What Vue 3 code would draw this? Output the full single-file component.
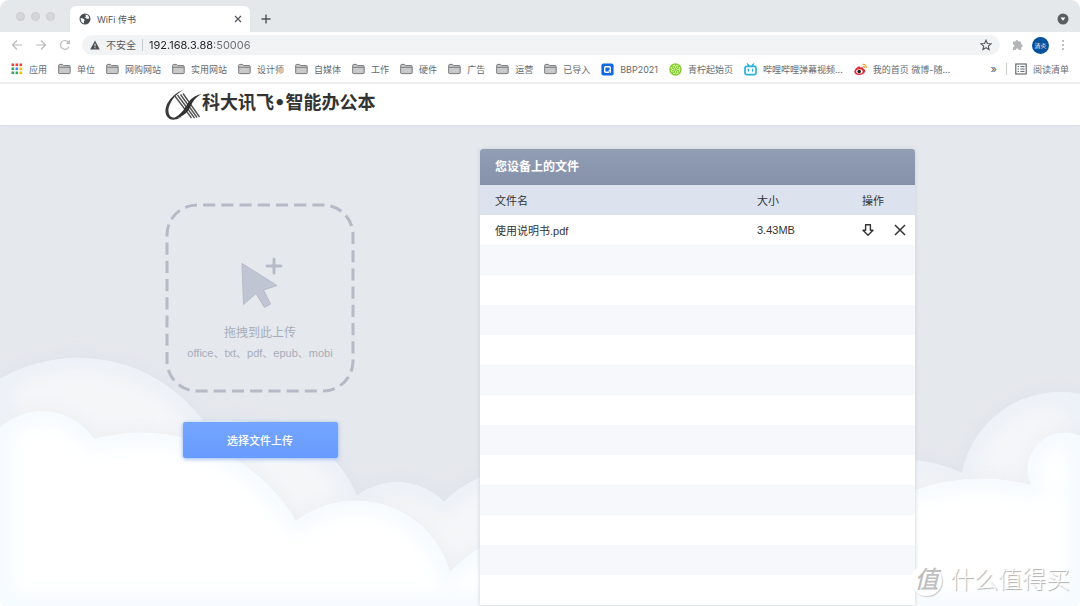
<script setup>
import { ref } from 'vue'

const address = ref('192.168.3.88:50006')
const fileInput = ref(null)

const bookmarks = [
  { icon: 'apps', label: '应用' },
  { icon: 'folder', label: '单位' },
  { icon: 'folder', label: '网购网站' },
  { icon: 'folder', label: '实用网站' },
  { icon: 'folder', label: '设计师' },
  { icon: 'folder', label: '自媒体' },
  { icon: 'folder', label: '工作' },
  { icon: 'folder', label: '硬件' },
  { icon: 'folder', label: '广告' },
  { icon: 'folder', label: '运营' },
  { icon: 'folder', label: '已导入' },
  { icon: 'bbp', label: 'BBP2021' },
  { icon: 'lime', label: '青柠起始页' },
  { icon: 'bili', label: '哔哩哔哩弹幕视频...' },
  { icon: 'weibo', label: '我的首页 微博-随...' },
]

const appDots = ['#ea4335', '#ea4335', '#ea4335', '#34a853', '#4285f4', '#fbbc04', '#34a853', '#34a853', '#fbbc04']

const files = ref([{ name: '使用说明书.pdf', size: '3.43MB' }])
const emptyRows = 12

const backCloud =
  'M0 379 A155 155 0 0 1 203 421 Q300 415 340 467 Q350 480 357 496 A65 65 0 0 1 444 502 Q470 475 520 465 Q600 500 700 480 Q800 440 915 460 Q940 463 962 473 A100 100 0 0 1 1080 394 V606 H0 Z'
const frontCloud =
  'M0 428 A62 62 0 0 1 94 439 A180 180 0 0 1 296 521 A98 98 0 0 1 450 572 Q470 550 500 538 H800 Q860 505 915 490 A205 205 0 0 1 1031 485 A37 37 0 0 1 1080 436 V606 H0 Z'

function pickFiles() {
  fileInput.value.click()
}
</script>

<template>
  <div class="window">
    <header class="browser">
      <div class="tabstrip">
        <div class="lights"><i></i><i></i><i></i></div>
        <div class="tab">
          <svg width="12" height="12" viewBox="0 0 12 12">
            <circle cx="6" cy="6" r="5.5" fill="#4a4e53" />
            <path d="M1.6 5 L4.2 5.6 L5.8 7 L4.9 8.2 L5 10.4 Q1.6 9.6 1.6 5Z M6.4 1.6 Q9.4 1.8 10.3 4.6 L9.4 6 L7.4 5.6 L6 4.4 L6.9 3.2Z" fill="#fff" />
          </svg>
          <span class="tab-title">WiFi 传书</span>
          <button class="plain" aria-label="关闭标签页">
            <svg width="8" height="8" viewBox="0 0 8 8"><path d="M1 1 L7 7 M7 1 L1 7" stroke="#55595e" stroke-width="1.3" /></svg>
          </button>
        </div>
        <button class="plain new-tab" aria-label="新标签页">
          <svg width="10" height="10" viewBox="0 0 10 10"><path d="M5 .5 V9.5 M.5 5 H9.5" stroke="#4d5156" stroke-width="1.4" /></svg>
        </button>
        <button class="plain tab-search" aria-label="搜索标签页">
          <svg width="12" height="12" viewBox="0 0 12 12"><circle cx="6" cy="6" r="5.5" fill="#5a5e63" /><path d="M3.6 4.6 H8.4 L6 7.8Z" fill="#fff" /></svg>
        </button>
      </div>

      <div class="toolbar">
        <div class="nav">
          <button class="plain" aria-label="后退">
            <svg width="12" height="12" viewBox="0 0 12 12"><path d="M11 6 H1.5 M6 1.5 L1.5 6 L6 10.5" fill="none" stroke="#b9bbbe" stroke-width="1.2" /></svg>
          </button>
          <button class="plain" aria-label="前进">
            <svg width="12" height="12" viewBox="0 0 12 12"><path d="M1 6 H10.5 M6 1.5 L10.5 6 L6 10.5" fill="none" stroke="#b9bbbe" stroke-width="1.2" /></svg>
          </button>
          <button class="plain" aria-label="重新加载">
            <svg width="12" height="12" viewBox="0 0 12 12"><path d="M10 7.5 A4.4 4.4 0 1 1 9.4 3.2" fill="none" stroke="#b9bbbe" stroke-width="1.2" /><path d="M11 .8 V5 H6.8Z" fill="#b9bbbe" /></svg>
          </button>
        </div>
        <div class="omnibox">
          <svg width="10" height="10" viewBox="0 0 10 10"><path d="M5 .6 L9.8 9.4 H.2Z" fill="#4d5156" /><path d="M5 3.6 V6.4 M5 7.2 V8.3" stroke="#f1f3f4" stroke-width="1" /></svg>
          <label class="insecure" for="address">不安全</label>
          <span class="bar"></span>
          <input id="address" v-model="address" class="address" type="text" spellcheck="false" />
          <button class="plain" aria-label="为此页添加书签">
            <svg width="12" height="12" viewBox="0 0 12 12"><path d="M6 1.2 L7.4 4.5 L11 4.8 L8.3 7.1 L9.1 10.6 L6 8.7 L2.9 10.6 L3.7 7.1 L1 4.8 L4.6 4.5Z" fill="none" stroke="#54585d" stroke-width="1.1" /></svg>
          </button>
        </div>
        <button class="plain" aria-label="扩展程序">
          <svg width="12" height="12" viewBox="0 0 12 12"><path d="M1 2.6 H3.4 A1.5 1.5 0 1 1 6.4 2.6 H9.2 V5.2 A1.5 1.5 0 1 1 9.2 8.2 V11 H6.6 A1.4 1.4 0 0 0 3.8 11 H1 V8.2 A1.4 1.4 0 0 0 1 5.4Z" fill="#b3b5b8" /></svg>
        </button>
        <button class="avatar" aria-label="用户">清炎</button>
        <button class="plain" aria-label="菜单">
          <svg width="4" height="12" viewBox="0 0 4 12" fill="#a9acaf"><circle cx="2" cy="2" r="1" /><circle cx="2" cy="6" r="1" /><circle cx="2" cy="10" r="1" /></svg>
        </button>
      </div>

      <nav class="bookmarks">
        <a v-for="mark in bookmarks" :key="mark.label" href="#" class="bookmark">
          <svg v-if="mark.icon === 'apps'" width="12" height="12" viewBox="0 0 12 12">
            <rect v-for="(c, i) in appDots" :key="i" :x="(i % 3) * 4 + 0.5" :y="Math.floor(i / 3) * 4 + 0.5" width="2.6" height="2.6" :fill="c" />
          </svg>
          <svg v-else-if="mark.icon === 'folder'" width="13" height="12" viewBox="0 0 13 12">
            <path d="M.7 10 V2.4 Q.7 1.4 1.7 1.4 H4.6 L5.7 2.6 H11 Q12.2 2.6 12.2 3.6 V9.9 Q12.2 10.6 11.3 10.6 H1.5 Q.7 10.6 .7 10Z" fill="#c9c9c9" stroke="#77797b" stroke-width="1" />
            <path d="M1 4.3 H12" stroke="#77797b" stroke-width=".9" />
          </svg>
          <svg v-else-if="mark.icon === 'bbp'" width="13" height="13" viewBox="0 0 13 13">
            <rect x=".4" y=".4" width="12.2" height="12.2" rx="2" fill="#0f68e0" />
            <path d="M8 9.2 H4.6 Q3.7 9.2 3.7 8.300 V4.600 Q3.7 3.7 4.600 3.7 H8.400 Q9.300 3.7 9.300 4.600 V8 M7.600 7.600 H9.300 V9.800" fill="none" stroke="#fff" stroke-width="1.4" />
          </svg>
          <svg v-else-if="mark.icon === 'lime'" width="13" height="13" viewBox="0 0 13 13">
            <circle cx="6.5" cy="6.5" r="6.2" fill="#84cc2e" />
            <circle cx="6.5" cy="6.5" r="4.2" fill="none" stroke="#d5f2a5" stroke-width="1.200" stroke-dasharray="2.300 1" />
            <path d="M6.5 3 V10 M3 6.5 H10 M4.2 4.2 L8.8 8.8 M8.8 4.2 L4.2 8.8" stroke="#e6f8c8" stroke-width=".8" />
            <circle cx="6.5" cy="6.5" r="1.2" fill="#84cc2e" />
          </svg>
          <svg v-else-if="mark.icon === 'bili'" width="13" height="13" viewBox="0 0 13 13">
            <rect x="1" y="3.4" width="11" height="8.2" rx="1.6" fill="none" stroke="#2bb0dc" stroke-width="1.7" />
            <path d="M3.4 .9 L5 3 M9.6 .9 L8 3 M4.4 6.3 V8 M8.6 6.3 V8" stroke="#2bb0dc" stroke-width="1.4" stroke-linecap="round" />
          </svg>
          <svg v-else width="13" height="13" viewBox="0 0 13 13">
            <path d="M.3 8.2 Q1 5 4.5 3.5 Q6.4 3 6.200 4.6 Q9.6 3.6 9.300 5.700 Q11.8 6.5 11 9 Q9.200 12 5 12 Q.3 11.8 .3 8.2Z" fill="#dd2b35" />
            <ellipse cx="5.4" cy="8.4" rx="3.2" ry="2.2" fill="#fff" />
            <circle cx="5.2" cy="8.5" r="1.8" fill="#222" />
            <path d="M8.6 1.5 Q12.4 1 12.3 5 M8.8 3.5 Q10.5 3.3 10.4 5" fill="none" stroke="#f3a02c" stroke-width="1.200" />
          </svg>
          <span>{{ mark.label }}</span>
        </a>
        <button class="plain more" aria-label="更多书签">»</button>
        <span class="bar"></span>
        <a href="#" class="bookmark">
          <svg width="12" height="12" viewBox="0 0 12 12"><rect x=".8" y="1" width="10.4" height="10" fill="none" stroke="#5b5f64" stroke-width="1.1" /><path d="M2.6 3.6 H4 M2.6 6 H4 M2.6 8.4 H4 M5.4 3.6 H9.5 M5.4 6 H9.5 M5.4 8.4 H9.5" stroke="#5b5f64" stroke-width="1" /></svg>
          <span>阅读清单</span>
        </a>
      </nav>
    </header>

    <div class="site-header">
      <div class="container brand">
        <svg width="37" height="32" viewBox="0 0 37 32" aria-hidden="true">
          <path d="M19 .5 Q7 5 2 15 Q-2 25 4 29.500 Q9 32.500 17 28 Q9 30 5.500 27.500 Q1.500 23 5 15 Q9 6 19 .5Z" fill="#3a3a3a" />
          <path d="M9.500 6.500 L26.500 29 M12.500 6 L29.500 29 M15.500 5.500 L32 28.500 M18 4.500 L34.500 28" stroke="#555" stroke-width="1.400" />
          <path d="M36.500 5 Q29 6.500 24.500 12 L18.500 21 Q15 26 8 29.500 Q17 29 22.500 22.500 Q25 19 27.500 13.500 Q30.500 8 36.500 5Z" fill="#2f2f2f" />
        </svg>
        <h1>科大讯飞<span class="dot">•</span>智能办公本</h1>
      </div>
    </div>

    <main class="page">
      <svg class="clouds" viewBox="0 126 1080 480" aria-hidden="true">
        <defs>
          <filter id="soft" x="-10%" y="-20%" width="120%" height="140%"><feGaussianBlur stdDeviation="10" /></filter>
          <clipPath id="backClip"><path :d="backCloud" /></clipPath>
          <clipPath id="frontClip"><path :d="frontCloud" /></clipPath>
        </defs>
        <path :d="backCloud" fill="#dadfea" opacity=".6" filter="url(#soft)" />
        <path :d="backCloud" fill="#f5f6f8" />
        <g clip-path="url(#backClip)">
          <path :d="backCloud" fill="none" stroke="#ebf1f8" stroke-width="24" filter="url(#soft)" />
          <path :d="frontCloud" fill="#e9ebef" opacity=".8" filter="url(#soft)" />
        </g>
        <path :d="frontCloud" fill="#fff" />
        <g clip-path="url(#frontClip)">
          <path :d="frontCloud" fill="none" stroke="#f2f9ff" stroke-width="18" filter="url(#soft)" />
        </g>
      </svg>

      <div class="container content">
        <section class="upload">
          <div class="dropzone">
            <svg class="outline" width="190" height="190" viewBox="0 0 190 190" aria-hidden="true">
              <rect x="2" y="2" width="186" height="186" rx="30" fill="none" stroke="#b5bac6" stroke-width="3" pathLength="684" stroke-dasharray="12 6" stroke-dashoffset="12" />
            </svg>
            <svg width="46" height="52" viewBox="0 0 46 52" aria-hidden="true">
              <path d="M5 6.500 L40 28.500 L26.500 33 L33.500 47 L27.500 50.500 L19 36.500 L6.500 47.500Z" fill="#bfc5d2" stroke="#b5bbc9" stroke-width="1" />
              <path d="M37 2 V16 M30 9 H44" stroke="#b5bbc9" stroke-width="3" stroke-linecap="round" />
            </svg>
            <p class="hint">拖拽到此上传</p>
            <p class="formats">office、txt、pdf、epub、mobi</p>
          </div>
          <button class="choose" @click="pickFiles">选择文件上传</button>
          <input ref="fileInput" type="file" hidden aria-label="选择文件上传" />
        </section>

        <section class="panel">
          <h2>您设备上的文件</h2>
          <table>
            <thead>
              <tr><th class="name">文件名</th><th class="size">大小</th><th>操作</th></tr>
            </thead>
            <tbody>
              <tr v-for="file in files" :key="file.name">
                <td>{{ file.name }}</td>
                <td>{{ file.size }}</td>
                <td>
                  <div class="actions">
                    <button class="plain" aria-label="下载">
                      <svg width="12" height="12" viewBox="0 0 12 12"><path d="M3.600 .8 H8.400 V6.200 H11 L6 11.200 L1 6.200 H3.600Z" fill="none" stroke="#333" stroke-width="1.400" stroke-linejoin="round" /></svg>
                    </button>
                    <button class="plain" aria-label="删除">
                      <svg width="12" height="12" viewBox="0 0 12 12"><path d="M1 1 L11 11 M11 1 L1 11" stroke="#333" stroke-width="1.500" /></svg>
                    </button>
                  </div>
                </td>
              </tr>
              <tr v-for="n in emptyRows" :key="n"><td></td><td></td><td></td></tr>
            </tbody>
          </table>
        </section>
      </div>
    </main>

    <div class="watermark"><span class="badge">值</span><span>什么值得买</span></div>
  </div>
</template>

<style>
body {
  background: #fff;
}
</style>

<style scoped>
.window {
  position: relative;
  display: flex;
  flex-direction: column;
  height: 100vh;
  overflow: hidden;
  border-radius: 9px;
  background: #fff;
  color: #333;
  font-family: "Liberation Sans", "Noto Sans CJK SC", sans-serif;
  font-size: 11px;
}
.window * {
  box-sizing: border-box;
}
svg {
  display: block;
  flex: none;
}
button {
  font-family: inherit;
  cursor: pointer;
}
.plain {
  display: block;
  flex: none;
  padding: 0;
  border: 0;
  background: none;
}
a {
  color: inherit;
  text-decoration: none;
}
.bar {
  width: 1px;
  height: 12px;
  background: #c9cccf;
}

/* browser chrome */
.browser {
  flex: none;
  font-family: Inter, "Noto Sans CJK SC", sans-serif;
}
.tabstrip {
  display: flex;
  align-items: flex-end;
  height: 32px;
  padding: 0 11px 0 16px;
  background: #e4e8eb;
}
.lights {
  display: flex;
  gap: 6px;
  align-self: center;
  width: 54px;
}
.lights i {
  width: 9px;
  height: 9px;
  border: 1px solid #cacccd;
  border-radius: 50%;
  background: #d5d6d7;
}
.tab {
  display: flex;
  align-items: center;
  gap: 6px;
  width: 180px;
  height: 26px;
  padding: 0 8px 0 9px;
  border-radius: 6px 6px 0 0;
  background: #fff;
}
.tab-title {
  flex: 1;
  color: #50545a;
  font-size: 9px;
}
.new-tab {
  margin: 0 auto 8px 11px;
}
.tab-search {
  margin-bottom: 7px;
}
.toolbar {
  display: flex;
  align-items: center;
  gap: 12px;
  height: 26px;
  padding: 0 15px 0 11px;
}
.nav {
  display: flex;
  gap: 12px;
}
.omnibox {
  display: flex;
  flex: 1;
  align-items: center;
  gap: 6px;
  height: 20px;
  margin-left: -1px;
  padding: 0 8px;
  border-radius: 10px;
  background: #f1f3f4;
}
.insecure {
  color: #55595e;
  font-size: 10px;
  line-height: 12px;
}
.address {
  flex: 1;
  min-width: 0;
  padding: 0;
  border: 0;
  outline: 0;
  background: linear-gradient(90deg, #202124 64px, #676b70 64px);
  background-clip: text;
  color: transparent;
  font-family: inherit;
  font-size: 11px;
}
.avatar {
  width: 17px;
  height: 17px;
  margin-left: -4px;
  padding: 0;
  border: 0;
  border-radius: 50%;
  background: #07529a;
  color: #fff;
  font-size: 6px;
  line-height: 17px;
}
.bookmarks {
  display: flex;
  align-items: center;
  gap: 11px;
  height: 26px;
  padding: 0 11px 2px;
  border-bottom: 2px solid #eeeff1;
  color: #66696e;
  font-size: 9px;
  white-space: nowrap;
}
.bookmark {
  display: flex;
  flex: none;
  align-items: center;
  gap: 6px;
}
.more {
  margin-left: auto;
  color: #55595e;
  font-size: 11px;
}
.bookmarks .bar {
  margin: 0 -3px 0 -2px;
}

/* site */
.container {
  width: 100%;
  max-width: 750px;
  margin: 0 auto;
}
.site-header {
  z-index: 1;
  flex: none;
  background: #fff;
  box-shadow: 0 1px 2px #d8dce2;
}
.brand {
  display: flex;
  align-items: center;
  height: 41px;
}
.brand h1 {
  margin: 0;
  font-size: 18px;
  font-weight: 700;
  line-height: 22px;
  padding-bottom: 3px;
}
.dot {
  font-family: "DejaVu Sans", sans-serif;
}
.page {
  position: relative;
  flex: 1;
  min-height: 0;
  background: #e5e8ed;
}
.clouds {
  position: absolute;
  bottom: 0;
  left: 0;
  width: 100%;
}
.content {
  position: relative;
  display: flex;
  align-items: flex-start;
  justify-content: space-between;
  padding-top: 24px;
}
.upload {
  display: flex;
  flex-direction: column;
  align-items: center;
  padding-top: 54px;
}
.dropzone {
  position: relative;
  display: flex;
  flex-direction: column;
  align-items: center;
  width: 190px;
  height: 190px;
  padding-top: 54px;
  color: #a7adba;
}
.outline {
  position: absolute;
  inset: 0;
}
.dropzone p {
  margin: 0;
  line-height: 20px;
}
.hint {
  padding-top: 14px;
  font-size: 12px;
}
.formats {
  font-size: 11px;
}
.choose {
  width: 155px;
  height: 36px;
  margin-top: 29px;
  border: 0;
  border-radius: 2px;
  background: linear-gradient(#74a5ff, #689bfe);
  box-shadow: 0 1px 4px #8fb4f8;
  color: #fff;
  font-size: 11px;
  font-weight: 500;
}
.panel {
  width: 58%;
  border-radius: 3px 3px 0 0;
  background: #fff;
  box-shadow: 0 0 4px #c9ced8;
}
.panel h2 {
  margin: 0;
  padding: 0 15px;
  border-radius: 3px 3px 0 0;
  background: linear-gradient(#929eb4, #8491aa);
  color: #fff;
  font-size: 12px;
  font-weight: 700;
  line-height: 36px;
}
table {
  width: 100%;
  border-collapse: collapse;
  table-layout: fixed;
}
th,
td {
  height: 30px;
  padding: 0;
  font-weight: 400;
  text-align: left;
}
th:first-child,
td:first-child {
  padding-left: 15px;
}
.name {
  width: 277px;
}
.size {
  width: 105px;
}
thead tr {
  background: #dce2ee;
}
tbody tr:nth-child(even) {
  background: #f7f8fc;
}
.actions {
  display: flex;
  gap: 20px;
}
.watermark {
  position: absolute;
  right: 10px;
  bottom: 10px;
  z-index: 2;
  display: flex;
  align-items: center;
  gap: 8px;
  color: #fff;
  font-size: 24px;
  font-weight: 300;
  line-height: 32px;
  text-shadow: 1px 1px 1px #aaa;
}
.badge {
  width: 31px;
  height: 31px;
  border-radius: 50%;
  background: #fff;
  box-shadow: 1px 1px 1px #ccc;
  color: #bfbfbf;
  font-style: italic;
  font-weight: 500;
  line-height: 30px;
  text-align: center;
  text-shadow: none;
}
</style>
